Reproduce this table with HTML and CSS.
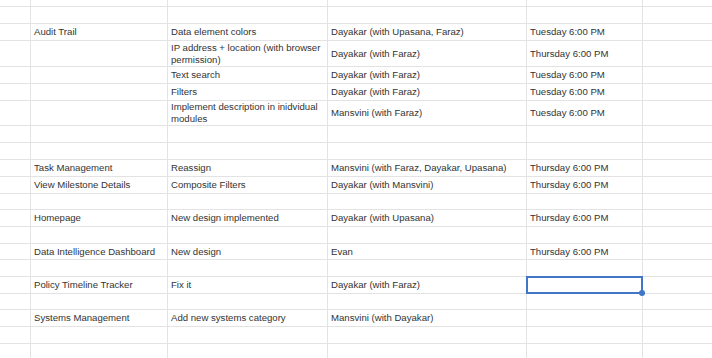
FILE: index.html
```html
<!DOCTYPE html>
<html lang="en">
<head>
<meta charset="utf-8">
<title>Sheet</title>
<link rel="stylesheet" href="styles.css">
</head>
<body>
<div class="sheet">
  <div class="row r7"><div class="c"></div><div class="c"></div><div class="c"></div><div class="c"></div><div class="c"></div><div class="c"></div></div>
  <div class="row r17"><div class="c"></div><div class="c"></div><div class="c"></div><div class="c"></div><div class="c"></div><div class="c"></div></div>
  <div class="row r17"><div class="c"></div><div class="c">Audit Trail</div><div class="c">Data element colors</div><div class="c">Dayakar (with Upasana, Faraz)</div><div class="c">Tuesday 6:00 PM</div><div class="c"></div></div>
  <div class="row r26"><div class="c"></div><div class="c"></div><div class="c">IP address + location (with browser permission)</div><div class="c">Dayakar (with Faraz)</div><div class="c">Thursday 6:00 PM</div><div class="c"></div></div>
  <div class="row r17"><div class="c"></div><div class="c"></div><div class="c">Text search</div><div class="c">Dayakar (with Faraz)</div><div class="c">Tuesday 6:00 PM</div><div class="c"></div></div>
  <div class="row r17"><div class="c"></div><div class="c"></div><div class="c">Filters</div><div class="c">Dayakar (with Faraz)</div><div class="c">Tuesday 6:00 PM</div><div class="c"></div></div>
  <div class="row r25"><div class="c"></div><div class="c"></div><div class="c">Implement description in inidvidual modules</div><div class="c">Mansvini (with Faraz)</div><div class="c">Tuesday 6:00 PM</div><div class="c"></div></div>
  <div class="row r17"><div class="c"></div><div class="c"></div><div class="c"></div><div class="c"></div><div class="c"></div><div class="c"></div></div>
  <div class="row r17"><div class="c"></div><div class="c"></div><div class="c"></div><div class="c"></div><div class="c"></div><div class="c"></div></div>
  <div class="row r17"><div class="c"></div><div class="c">Task Management</div><div class="c">Reassign</div><div class="c">Mansvini (with Faraz, Dayakar, Upasana)</div><div class="c">Thursday 6:00 PM</div><div class="c"></div></div>
  <div class="row r17"><div class="c"></div><div class="c">View Milestone Details</div><div class="c">Composite Filters</div><div class="c">Dayakar (with Mansvini)</div><div class="c">Thursday 6:00 PM</div><div class="c"></div></div>
  <div class="row r16"><div class="c"></div><div class="c"></div><div class="c"></div><div class="c"></div><div class="c"></div><div class="c"></div></div>
  <div class="row r17"><div class="c"></div><div class="c">Homepage</div><div class="c">New design implemented</div><div class="c">Dayakar (with Upasana)</div><div class="c">Thursday 6:00 PM</div><div class="c"></div></div>
  <div class="row r17"><div class="c"></div><div class="c"></div><div class="c"></div><div class="c"></div><div class="c"></div><div class="c"></div></div>
  <div class="row r16"><div class="c"></div><div class="c">Data Intelligence Dashboard</div><div class="c">New design</div><div class="c">Evan</div><div class="c">Thursday 6:00 PM</div><div class="c"></div></div>
  <div class="row r17"><div class="c"></div><div class="c"></div><div class="c"></div><div class="c"></div><div class="c"></div><div class="c"></div></div>
  <div class="row r17"><div class="c"></div><div class="c">Policy Timeline Tracker</div><div class="c">Fix it</div><div class="c">Dayakar (with Faraz)</div><div class="c sel-cell"><span class="selection"><span class="handle"></span></span></div><div class="c"></div></div>
  <div class="row r16"><div class="c"></div><div class="c"></div><div class="c"></div><div class="c"></div><div class="c"></div><div class="c"></div></div>
  <div class="row r17"><div class="c"></div><div class="c">Systems Management</div><div class="c">Add new systems category</div><div class="c">Mansvini (with Dayakar)</div><div class="c"></div><div class="c"></div></div>
  <div class="row r17"><div class="c"></div><div class="c"></div><div class="c"></div><div class="c"></div><div class="c"></div><div class="c"></div></div>
  <div class="row r17"><div class="c"></div><div class="c"></div><div class="c"></div><div class="c"></div><div class="c"></div><div class="c"></div></div>
</div>
</body>
</html>
```
FILE: styles.css
```css
html, body {
  margin: 0;
  padding: 0;
  background: #ffffff;
  overflow: hidden;
}
.sheet {
  width: 712px;
  height: 358px;
  overflow: hidden;
  font-family: "Liberation Sans", Arial, sans-serif;
  font-size: 9.6px;
  line-height: 12px;
  color: #333333;
}
.row {
  display: grid;
  grid-template-columns: 31px 137px 160px 199px 116px 90px;
}
.r7 { height: 7px; }
.r16 { height: 16px; }
.r17 { height: 17px; }
.r25 { height: 25px; }
.r26 { height: 26px; }
.c {
  box-sizing: border-box;
  border-right: 1px solid #e3e3e3;
  border-bottom: 1px solid #e3e3e3;
  padding: 0 3px;
  display: flex;
  align-items: center;
  overflow: hidden;
  white-space: normal;
}
.sel-cell {
  position: relative;
  overflow: visible;
}
.selection {
  position: absolute;
  left: -1px;
  top: -1px;
  right: -1px;
  bottom: -1px;
  border: 2px solid #3f76c8;
  box-sizing: border-box;
  z-index: 2;
}
.handle {
  position: absolute;
  right: -4px;
  bottom: -4px;
  width: 6px;
  height: 6px;
  border-radius: 50%;
  background: #3f76c8;
}
```
